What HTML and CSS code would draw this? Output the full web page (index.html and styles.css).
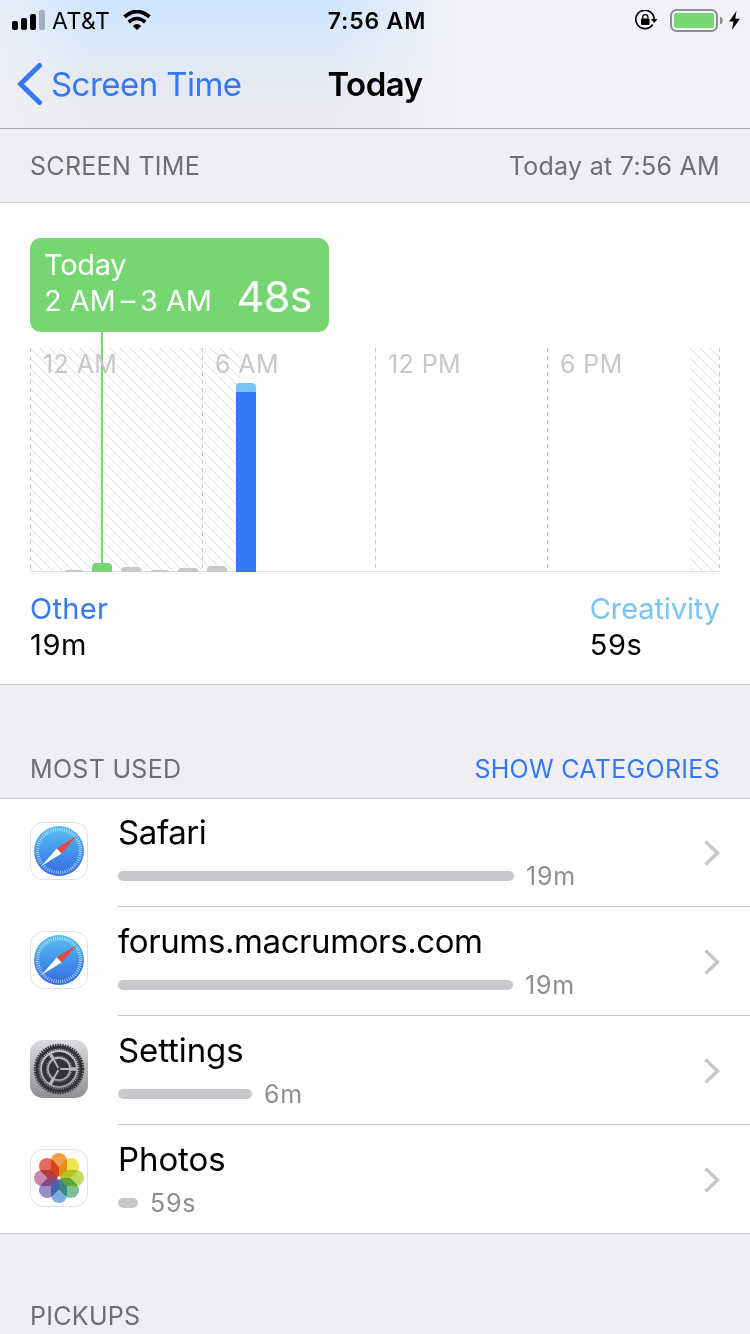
FILE: index.html
```html
<!DOCTYPE html>
<html lang="en">
<head>
    <meta charset="UTF-8">
    <meta name="viewport" content="width=device-width, initial-scale=1.0">
    <title>Screen Time</title>
    <link rel="stylesheet" href="styles.css">
</head>
<body>
    <!-- shared icons -->
    <svg class="defs" width="0" height="0">
        <defs>
            <linearGradient id="safari-blue" x1="0" y1="0" x2="0" y2="1">
                <stop offset="0" stop-color="#55c1ef"/>
                <stop offset="1" stop-color="#3469e4"/>
            </linearGradient>
            <linearGradient id="settings-bg" x1="0" y1="0" x2="0" y2="1">
                <stop offset="0" stop-color="#dcdce0"/>
                <stop offset="1" stop-color="#8e8e93"/>
            </linearGradient>
            <symbol id="safari" viewBox="0 0 58 58">
                <rect x=".5" y=".5" width="57" height="57" rx="13" fill="#fff" stroke="#e2e2e4"/>
                <circle cx="29" cy="29" r="25" fill="url(#safari-blue)"/>
                <circle cx="29" cy="29" r="21.5" fill="none" stroke="#fff" stroke-opacity=".7" stroke-width="3.4" stroke-dasharray=".8 1.45"/>
                <path d="M47 13.500L26.800 26.500L31.600 31.500Z" fill="#e8483f"/>
                <path d="M11.500 44L26.800 26.500L31.600 31.500Z" fill="#fff"/>
            </symbol>
            <symbol id="chevron" viewBox="0 0 16 26">
                <path d="M1.500 1.500L13.500 13L1.500 24.500" fill="none" stroke="#c7c7cc" stroke-width="3.600"/>
            </symbol>
            <path id="petal" d="M21 21V12a8 8 0 0 1 16 0V21L29 29Z"/>
        </defs>
    </svg>

    <header class="header">
        <div class="status-bar">
            <div class="status-left">
                <svg width="33" height="20" viewBox="0 0 33 20">
                    <rect x="0" y="11" width="6" height="9" rx="2"/>
                    <rect x="9" y="8" width="6" height="12" rx="2"/>
                    <rect x="18" y="4" width="6" height="16" rx="2"/>
                    <rect x="27" y="0" width="6" height="20" rx="2" fill="#a3afbf"/>
                </svg>
                <span class="carrier">AT&amp;T</span>
                <svg class="wifi" width="28" height="20" viewBox="0 0 28 20">
                    <path d="M1.500 6.800Q14-3.800 26.500 6.800" fill="none" stroke="#000" stroke-width="3.800"/>
                    <path d="M5.700 12Q14 5 22.300 12" fill="none" stroke="#000" stroke-width="3.600"/>
                    <path d="M9.800 16Q14 12.200 18.200 16L14 20Z"/>
                </svg>
            </div>
            <span class="clock">7:56 AM</span>
            <div class="status-right">
                <svg width="23" height="20" viewBox="0 0 23 20">
                    <path d="M17.700 14.500A9.200 9.200 0 1 1 19.200 9.500" fill="none" stroke="#000" stroke-width="1.600"/>
                    <path d="M16 9H22.500L19.200 13Z"/>
                    <rect x="6" y="8.500" width="8.500" height="6.500" rx="1"/>
                    <path d="M7.700 9V7.200a2.600 2.600 0 0 1 5.200 0V9" fill="none" stroke="#000" stroke-width="1.200"/>
                </svg>
                <svg width="53" height="23" viewBox="0 0 53 23">
                    <rect x="1" y="1" width="46" height="21" rx="5.500" fill="none" stroke="#8e8e93" stroke-width="2"/>
                    <rect x="4" y="4" width="40" height="15" rx="2.500" fill="#76d672"/>
                    <path d="M50 7.500Q53 9 53 11.500T50 15.500Z" fill="#8e8e93"/>
                </svg>
                <svg width="11" height="19" viewBox="0 0 11 19">
                    <path d="M7.500 0L0 10.500H4.500L3 19L11 7.800H6.300Z"/>
                </svg>
            </div>
        </div>
        <nav class="nav-bar">
            <a class="back">
                <svg width="26" height="42" viewBox="0 0 26 42">
                    <path d="M22.500 2.500L3.500 21L22.500 39.500" fill="none" stroke="#3478f6" stroke-width="5" stroke-linecap="round"/>
                </svg>
                <span>Screen Time</span>
            </a>
            <h1 class="title">Today</h1>
        </nav>
    </header>

    <div class="section-header first">
        <span>SCREEN TIME</span>
        <span class="updated">Today at 7:56 AM</span>
    </div>

    <section class="usage">
        <div class="bubble">
            <div class="bubble-text">
                <div>Today</div>
                <div class="bubble-range">2 AM<span class="dash">–</span>3 AM</div>
            </div>
            <div class="bubble-value">48s</div>
        </div>

        <svg class="chart" width="690" height="224" viewBox="0 0 690 224">
            <defs>
                <pattern id="hatch" width="10" height="10" patternUnits="userSpaceOnUse">
                    <path d="M-1-1L11 11M9-1L11 1M-1 9L1 11" stroke="#dedee0" stroke-width="1"/>
                </pattern>
            </defs>
            <rect x="0" y="0" width="210" height="223" fill="url(#hatch)"/>
            <rect x="660" y="0" width="30" height="223" fill="url(#hatch)"/>
            <g class="grid">
                <path d="M.5 0V223M172.500 0V223M345.500 0V223M517.500 0V223M689.500 0V223"/>
            </g>
            <rect x="0" y="223" width="690" height="1" fill="#e0e0e3"/>
            <rect x="71" y="-16" width="2" height="232" fill="#76d672"/>
            <g class="hours">
                <text x="13" y="25">12 AM</text>
                <text x="185" y="25">6 AM</text>
                <text x="358" y="25">12 PM</text>
                <text x="530" y="25">6 PM</text>
            </g>
            <g fill="#c7c7cc">
                <path d="M35 224q0-2 3-2h12q3 0 3 2z"/>
                <path d="M91 224v-1q0-4 4-4h12q4 0 4 4v1z"/>
                <path d="M121 224q0-2 3-2h12q3 0 3 2z"/>
                <path d="M148 224v-1q0-3 4-3h12q4 0 4 3v1z"/>
                <path d="M177 224v-2q0-4 4-4h12q4 0 4 4v2z"/>
            </g>
            <path d="M62 224v-5q0-4 4-4h12q4 0 4 4v5z" fill="#76d672"/>
            <path d="M206 44v-5q0-4 4-4h12q4 0 4 4v5z" fill="#78c5f5"/>
            <rect x="206" y="44" width="20" height="180" fill="#3478f6"/>
        </svg>

        <div class="legend">
            <div>
                <div class="other">Other</div>
                <div class="legend-time">19m</div>
            </div>
            <div>
                <div class="creativity">Creativity</div>
                <div class="legend-time">59s</div>
            </div>
        </div>
    </section>

    <div class="section-header">
        <span>MOST USED</span>
        <a class="categories">SHOW CATEGORIES</a>
    </div>

    <ul class="apps">
        <li class="app">
            <svg class="app-icon"><use href="#safari"/></svg>
            <div class="app-body">
                <div class="app-info">
                    <div class="app-name web">Safari</div>
                    <div class="app-usage"><span class="bar" style="width: 396px"></span>19m</div>
                </div>
                <svg class="chevron"><use href="#chevron"/></svg>
            </div>
        </li>
        <li class="app">
            <svg class="app-icon"><use href="#safari"/></svg>
            <div class="app-body">
                <div class="app-info">
                    <div class="app-name web">forums.macrumors.com</div>
                    <div class="app-usage"><span class="bar" style="width: 395px"></span>19m</div>
                </div>
                <svg class="chevron"><use href="#chevron"/></svg>
            </div>
        </li>
        <li class="app">
            <svg class="app-icon" viewBox="0 0 58 58">
                <rect width="58" height="58" rx="13" fill="url(#settings-bg)"/>
                <circle cx="29" cy="29" r="22" fill="none" stroke="#333336" stroke-width="3"/>
                <circle cx="29" cy="29" r="24" fill="none" stroke="#333336" stroke-width="2.500" stroke-dasharray="1.600 .913"/>
                <circle cx="29" cy="29" r="19.800" fill="none" stroke="#333336" stroke-width="2" stroke-dasharray="1.200 .874"/>
                <circle cx="29" cy="29" r="15" fill="none" stroke="#333336" stroke-width="4"/>
                <circle cx="29" cy="29" r="12.600" fill="none" stroke="#333336" stroke-width="1.500" stroke-dasharray="1.200 .779"/>
                <path d="M29 29H47M29 29L20 13.400M29 29L20 44.600" stroke="#b8b8bc" stroke-width="3.400"/>
                <circle cx="29" cy="29" r="10.300" fill="#333336"/>
                <path d="M29 29H40M29 29L23.500 19.500M29 29L23.500 38.500" stroke="#b8b8bc" stroke-width="1.800"/>
                <circle cx="29" cy="29" r="1.300" fill="#333336"/>
            </svg>
            <div class="app-body">
                <div class="app-info">
                    <div class="app-name">Settings</div>
                    <div class="app-usage"><span class="bar" style="width: 134px"></span>6m</div>
                </div>
                <svg class="chevron"><use href="#chevron"/></svg>
            </div>
        </li>
        <li class="app">
            <svg class="app-icon" viewBox="0 0 58 58">
                <rect x=".5" y=".5" width="57" height="57" rx="13" fill="#fff" stroke="#e2e2e4"/>
                <g class="petals">
                    <use href="#petal" fill="#f0a04b"/>
                    <use href="#petal" fill="#f3e44c" transform="rotate(45 29 29)"/>
                    <use href="#petal" fill="#bfda62" transform="rotate(90 29 29)"/>
                    <use href="#petal" fill="#7cc197" transform="rotate(135 29 29)"/>
                    <use href="#petal" fill="#79b0e0" transform="rotate(180 29 29)"/>
                    <use href="#petal" fill="#9c8dc6" transform="rotate(225 29 29)"/>
                    <use href="#petal" fill="#ca88b3" transform="rotate(270 29 29)"/>
                    <use href="#petal" fill="#e76a5f" transform="rotate(315 29 29)"/>
                </g>
                <circle cx="29" cy="29" r="1.800" fill="#fff"/>
            </svg>
            <div class="app-body">
                <div class="app-info">
                    <div class="app-name">Photos</div>
                    <div class="app-usage"><span class="bar" style="width: 20px"></span>59s</div>
                </div>
                <svg class="chevron"><use href="#chevron"/></svg>
            </div>
        </li>
    </ul>

    <div class="section-header last">
        <span>PICKUPS</span>
    </div>
</body>
</html>
```
FILE: styles.css
```css
:root {
    --page-bg: #efeef3;
    --line: #c8c7cc;
    --blue: #3478f6;
    --light-blue: #78c5f5;
    --green: #76d672;
    --gray-text: #6d6d72;
}

* {
    box-sizing: border-box;
}
body {
    margin: 0;
    width: 750px;
    height: 1334px;
    overflow: hidden;
    background-color: var(--page-bg);
    color: #000;
    font-family: Inter, "Liberation Sans", sans-serif;
}
svg {
    display: block;
    flex-shrink: 0;
}
.defs {
    position: absolute;
}

/* header */
.header {
    height: 129px;
    border-bottom: 1px solid #a9a9ad;
    background:
        linear-gradient(90deg, rgba(242, 243, 247, 0.7) 0, rgba(242, 243, 247, 0) 90px, rgba(242, 243, 247, 0) 330px, rgba(242, 243, 247, 0.5) 395px, #f2f3f7 450px),
        linear-gradient(180deg, #cfe4fe 0, #dbe8fa 45px, #e6e9f1 85px, #ebebed 128px);
}
.status-bar {
    display: grid;
    grid-template-columns: 1fr auto 1fr;
    align-items: center;
    height: 40px;
    padding: 0 10px 0 12px;
}
.status-left, .status-right {
    display: flex;
    align-items: center;
}
.carrier {
    margin-left: 7px;
    padding-top: 2px;
    font-size: 23px;
    letter-spacing: 0.5px;
}
.wifi {
    margin-left: 13px;
}
.clock {
    padding: 2px 0 0 2px;
    font-size: 23px;
    font-weight: 600;
    letter-spacing: 0.8px;
}
.status-right {
    justify-content: flex-end;
    gap: 12px;
}
.status-right svg:last-child {
    margin-left: -6px;
}
.nav-bar {
    display: grid;
    grid-template-columns: 1fr auto 1fr;
    align-items: center;
    height: 88px;
    padding: 0 17px;
}
.back {
    display: flex;
    align-items: center;
    gap: 8px;
    color: var(--blue);
    font-size: 33px;
    letter-spacing: -0.55px;
}
.title {
    margin: 0;
    font-size: 33px;
    font-weight: 600;
    letter-spacing: -0.5px;
}

/* section headers */
.section-header {
    display: flex;
    justify-content: space-between;
    align-items: flex-end;
    height: 114px;
    padding: 0 30px 13px;
    border-bottom: 1px solid var(--line);
    color: var(--gray-text);
    font-size: 25px;
    line-height: 32px;
    letter-spacing: 0.3px;
}
.section-header.first {
    height: 74px;
    padding-bottom: 20px;
}
.section-header.last {
    height: 100px;
    padding-bottom: 2px;
    border-bottom: none;
}
.categories {
    color: var(--blue);
}

/* usage chart */
.usage {
    height: 482px;
    padding: 35px 30px 0;
    background-color: #fefefe;
    border-bottom: 1px solid var(--line);
}
.bubble {
    display: flex;
    justify-content: space-between;
    align-items: flex-end;
    width: 299px;
    height: 94px;
    margin-bottom: 16px;
    padding: 0 17px 13px 14px;
    border-radius: 11px;
    background-color: var(--green);
    color: #fff;
}
.bubble-text {
    font-size: 29px;
    line-height: 36px;
    letter-spacing: -0.3px;
}
.bubble-range {
    letter-spacing: -0.1px;
}
.dash {
    margin: 0 5px;
}
.bubble-value {
    font-size: 43px;
    line-height: 46px;
    letter-spacing: -0.5px;
}
.chart {
    overflow: visible;
}
.grid {
    stroke: #c7c7cc;
    stroke-width: 1;
    stroke-dasharray: 4 4;
}
.hours {
    fill: #c7c7cc;
    font-size: 25px;
    letter-spacing: 0.4px;
}
.legend {
    display: flex;
    justify-content: space-between;
    padding-top: 19px;
    font-size: 29px;
    line-height: 36px;
}
.other {
    color: var(--blue);
    letter-spacing: 0.3px;
}
.creativity {
    color: var(--light-blue);
    letter-spacing: -0.1px;
}
.legend-time {
    letter-spacing: 0.6px;
}

/* app list */
.apps {
    margin: 0;
    padding: 0;
    list-style: none;
    background-color: #fefefe;
    border-bottom: 1px solid var(--line);
}
.app {
    display: flex;
    align-items: center;
    height: 109px;
    padding-left: 30px;
}
.app:first-child, .app:last-child {
    height: 108px;
}
.app-icon {
    width: 58px;
    height: 58px;
    margin: 0 30px 4px 0;
}
.app:last-child .app-icon {
    margin-bottom: 2px;
}
.app-body {
    flex: 1;
    display: flex;
    justify-content: space-between;
    align-items: center;
    height: 100%;
    padding-right: 30px;
    border-bottom: 1px solid var(--line);
}
.app:last-child .app-body {
    border-bottom: none;
}
.app-name {
    font-size: 33px;
    line-height: 40px;
    letter-spacing: -0.1px;
}
.app-name.web {
    letter-spacing: -0.4px;
}
.app-usage {
    display: flex;
    align-items: center;
    gap: 12px;
    margin-top: 8px;
    margin-bottom: 1px;
    color: #8e8e93;
    font-size: 25px;
    line-height: 32px;
    letter-spacing: 0.8px;
}
.bar {
    height: 10px;
    border-radius: 5px;
    background-color: #c7c7cc;
}
.chevron {
    width: 16px;
    height: 26px;
    margin-top: 1px;
}
.petals {
    isolation: isolate;
}
.petals use {
    mix-blend-mode: multiply;
}
```
